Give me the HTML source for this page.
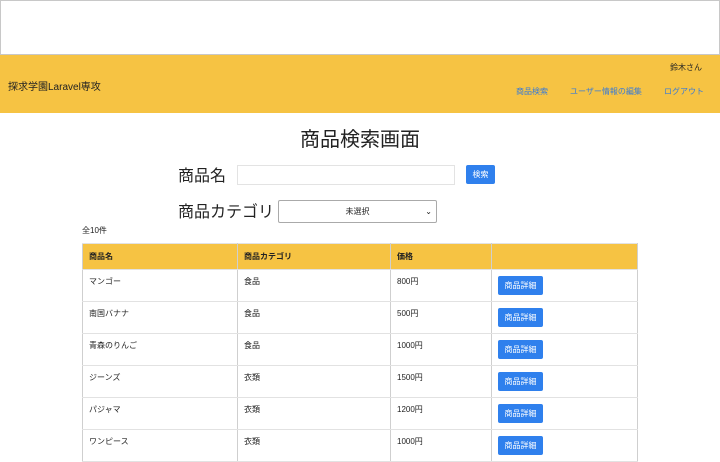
<!DOCTYPE html>
<html><head><meta charset="utf-8"><style>
*{box-sizing:border-box;margin:0;padding:0}
body{width:720px;height:450px;overflow:hidden;background:#fff;font-family:"Liberation Sans","Noto Sans CJK JP",sans-serif;color:#222;position:relative}
.top{position:absolute;left:0;top:0;width:720px;height:55px;border:1px solid #c8c8c8;background:#fff}
.hd{position:absolute;left:0;top:55px;width:720px;height:58px;background:#f6c343}
.a{position:absolute;white-space:nowrap}
.nav{color:#3a7bd5;font-size:8px}
.btn{position:absolute;background:#2f80ed;color:#fff;border-radius:2px;font-size:8px;text-align:center}
table{position:absolute;left:82px;top:243px;width:556px;border-collapse:collapse;font-size:8px}
td,th{border:1px solid #e2e2e2;border-left:1.5px solid #cfcfcf;border-right:1.5px solid #cfcfcf;text-align:left;vertical-align:top;padding:6px 6px;height:29.5px;position:relative}
th{background:#f6c343;height:26px;font-weight:bold;padding:7px 6px}
td .btn{position:static;display:inline-block;width:45px;height:19px;line-height:19px;margin-top:0;margin-left:0}
</style></head><body>
<div class="top"></div>
<div class="hd">
<div class="a" style="left:8px;top:23px;font-size:10px">探求学園Laravel専攻</div>
<div class="a" style="left:670px;top:7px;font-size:8px">鈴木さん</div>
<div class="a nav" style="left:516px;top:31px">商品検索</div>
<div class="a nav" style="left:570px;top:31px">ユーザー情報の編集</div>
<div class="a nav" style="left:664px;top:31px">ログアウト</div>
</div>
<div class="a" style="left:300px;top:123px;font-size:20px">商品検索画面</div>
<div class="a" style="left:178px;top:162px;font-size:16px">商品名</div>
<div class="a" style="left:237px;top:165px;width:218px;height:20px;border:1px solid #e3e3e3"></div>
<div class="btn" style="left:466px;top:165px;width:29px;height:19px;line-height:19px">検索</div>
<div class="a" style="left:178px;top:198px;font-size:16px">商品カテゴリ</div>
<div class="a" style="left:278px;top:200px;width:159px;height:23px;border:1px solid #aaa;border-radius:2px;font-size:8px;text-align:center;line-height:21px">未選択<span style="position:absolute;right:4px;top:0">⌄</span></div>
<div class="a" style="left:82px;top:225px;font-size:8px">全10件</div>
<table>
<tr><th style="width:155px">商品名</th><th style="width:153px">商品カテゴリ</th><th style="width:101px">価格</th><th></th></tr>
<tr><td>マンゴー</td><td>食品</td><td>800円</td><td><span class="btn">商品詳細</span></td></tr>
<tr><td>南国バナナ</td><td>食品</td><td>500円</td><td><span class="btn">商品詳細</span></td></tr>
<tr><td>青森のりんご</td><td>食品</td><td>1000円</td><td><span class="btn">商品詳細</span></td></tr>
<tr><td>ジーンズ</td><td>衣類</td><td>1500円</td><td><span class="btn">商品詳細</span></td></tr>
<tr><td>パジャマ</td><td>衣類</td><td>1200円</td><td><span class="btn">商品詳細</span></td></tr>
<tr><td>ワンピース</td><td>衣類</td><td>1000円</td><td><span class="btn">商品詳細</span></td></tr>
</table>
</body></html>
